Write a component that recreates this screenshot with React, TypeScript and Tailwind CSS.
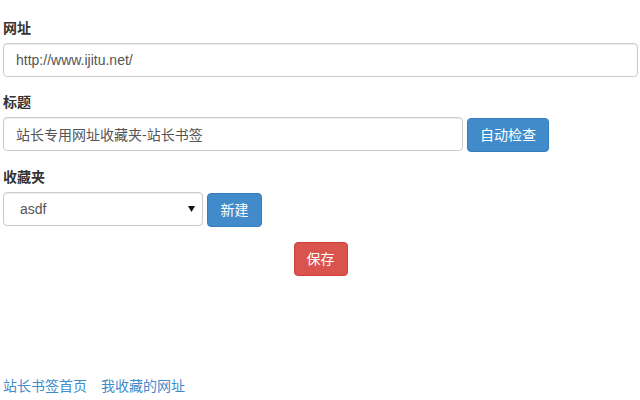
export default function App() {
  const font = { fontFamily: '"Liberation Sans", "Noto Sans CJK SC", sans-serif' };
  return (
    <div className="w-[640px] h-[400px] bg-white text-[14px] leading-[20px] text-[#333] pl-[3px] pr-[2px] pt-[18px] flex flex-col" style={font}>
      <div className="mb-[15px]">
        <div className="font-bold mb-[5px]">网址</div>
        <input
          className="block w-full h-[34px] px-[12px] border border-[#ccc] rounded-[4px] text-[#555] text-[14px] outline-none shadow-[inset_0_1px_1px_rgba(0,0,0,0.075)]"
          defaultValue="http://www.ijitu.net/"
        />
      </div>
      <div className="mb-[15px]">
        <div className="font-bold mb-[5px]">标题</div>
        <div className="flex gap-[4px]">
          <input
            className="block w-[460px] h-[34px] px-[12px] border border-[#ccc] rounded-[4px] text-[#555] text-[14px] outline-none shadow-[inset_0_1px_1px_rgba(0,0,0,0.075)]"
            defaultValue="站长专用网址收藏夹-站长书签"
          />
          <button className="mt-[1px] h-[34px] w-[82px] rounded-[4px] bg-[#428bca] border border-[#357ebd] text-white text-[14px]">
            自动检查
          </button>
        </div>
      </div>
      <div className="mb-[15px]">
        <div className="font-bold mb-[5px]">收藏夹</div>
        <div className="flex gap-[4px]">
          <div className="relative w-[200px] h-[34px]">
            <select className="appearance-none w-full h-full pl-[16px] pr-[24px] border border-[#ccc] rounded-[4px] text-[#555] text-[14px] bg-white outline-none shadow-[inset_0_1px_1px_rgba(0,0,0,0.075)]">
              <option>asdf</option>
            </select>
            <svg className="absolute right-[8px] top-[14px] pointer-events-none" width="7" height="6" viewBox="0 0 7 6">
              <polygon points="0,0 7,0 3.5,6" fill="#111" />
            </svg>
          </div>
          <button className="mt-[1px] h-[34px] w-[55px] rounded-[4px] bg-[#428bca] border border-[#357ebd] text-white text-[14px]">
            新建
          </button>
        </div>
      </div>
      <div className="flex justify-center">
        <button className="h-[34px] w-[54px] rounded-[4px] bg-[#d9534f] border border-[#d43f3a] text-white text-[14px]">
          保存
        </button>
      </div>
      <div className="mt-[100px] flex gap-[14px] text-[#428bca]">
        <a href="#" className="text-[#428bca]">站长书签首页</a>
        <a href="#" className="text-[#428bca]">我收藏的网址</a>
      </div>
    </div>
  );
}
